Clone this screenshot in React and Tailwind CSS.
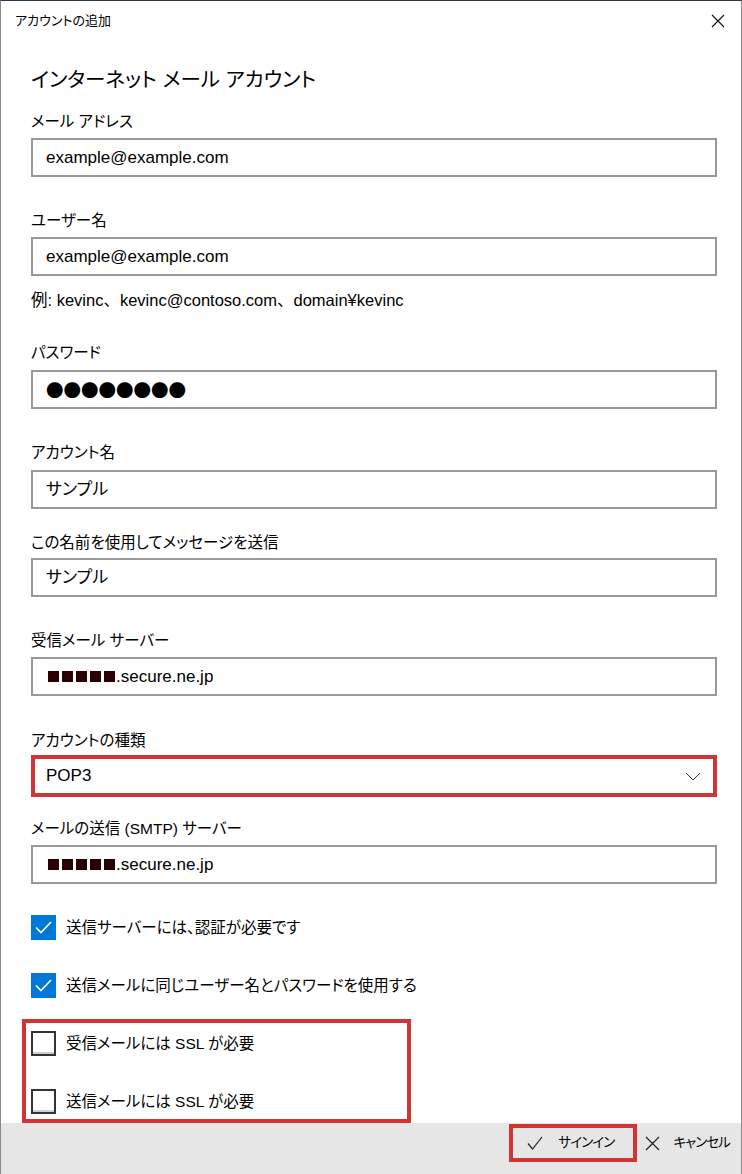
import React from "react";

const FONT = { fontFamily: '"Liberation Sans", "Noto Sans CJK JP", sans-serif', fontFeatureSettings: '"palt"' };

function Label({ children, className = "" }) {
    return <div className={`h-[22px] leading-[22px] text-[15.5px] text-black ${className}`}>{children}</div>
}

function Field({ children, className = "" }) {
    return (
        <div className={`h-[39px] border-2 border-[#999999] bg-white flex items-center pl-[13px] text-[17px] text-black ${className}`}>
            {children}
        </div>
    )
}

function Masked() {
    return (
        <span className="flex items-center">
            <span className="flex gap-[3px] mr-[1px] ml-[2px]">
                <span className="w-[11px] h-[11px] bg-[#2a0000]"></span>
                <span className="w-[11px] h-[11px] bg-[#2a0000]"></span>
                <span className="w-[11px] h-[11px] bg-[#2a0000]"></span>
                <span className="w-[11px] h-[11px] bg-[#2a0000]"></span>
                <span className="w-[11px] h-[11px] bg-[#2a0000]"></span>
            </span>
            .secure.ne.jp
        </span>
    )
}

function Check({ checked, children, className = "" }) {
    return (
        <div className={`flex items-center h-[25px] ${className}`}>
            {checked ? (
                <span className="w-[25px] h-[25px] bg-[#0078d7] flex items-center justify-center">
                    <svg width="17" height="13" viewBox="0 0 17 13">
                        <path d="M1 6.5 L6 11.5 L16 1" fill="none" stroke="white" strokeWidth="1.6" />
                    </svg>
                </span>
            ) : (
                <span className="w-[25px] h-[25px] border-2 border-[#333333] bg-white shadow-[inset_0_-2px_0_#cfcfcf]"></span>
            )}
            <span className="ml-[10px] text-[15.5px] text-black leading-[22px]">{children}</span>
        </div>
    )
}

export default function App() {
    return (
        <div style={FONT} className="w-[742px] h-[1174px] flex flex-col bg-white border-t border-[#2b3a4a] border-l border-r border-l-[#8a8a8a] border-r-[#8a8a8a] overflow-hidden">
            <div className="h-[39px] flex items-center justify-between pl-[14px] pr-[16px]">
                <span className="text-[13px] text-black">アカウントの追加</span>
                <svg width="14" height="14" viewBox="0 0 14 14">
                    <path d="M1 1 L13 13 M13 1 L1 13" stroke="#111" strokeWidth="1.1" />
                </svg>
            </div>

            <div className="flex flex-col pl-[30px] pr-[24px]">
                <div className="mt-[26px] h-[28px] leading-[28px] text-[20.5px] text-black">インターネット メール アカウント</div>

                <Label className="mt-[17px]">メール アドレス</Label>
                <Field className="mt-[5px]">example@example.com</Field>

                <Label className="mt-[33px]">ユーザー名</Label>
                <Field className="mt-[5px]">example@example.com</Field>
                <div className="mt-[13px] h-[22px] leading-[22px] text-[16.5px] text-black [font-feature-settings:normal]">例: kevinc、kevinc@contoso.com、domain¥kevinc</div>

                <Label className="mt-[31px]">パスワード</Label>
                <Field className="mt-[6px]">
                    <span className="text-[17.5px] leading-none [font-family:'Noto_Sans_CJK_JP',sans-serif]">●●●●●●●●</span>
                </Field>

                <Label className="mt-[33px]">アカウント名</Label>
                <Field className="mt-[6px]">サンプル</Field>

                <Label className="mt-[23px]">この名前を使用してメッセージを送信</Label>
                <Field className="mt-[4px]">サンプル</Field>

                <Label className="mt-[33px]">受信メール サーバー</Label>
                <Field className="mt-[5px]"><Masked /></Field>

                <Label className="mt-[34px]">アカウントの種類</Label>
                <div className="mt-[3px] h-[42px] border-4 border-[#d03535] bg-white flex items-center justify-between pl-[11px] pr-[12px] text-[17px] text-black">
                    <span>POP3</span>
                    <svg width="16" height="9" viewBox="0 0 16 9">
                        <path d="M1 1 L8 8 L15 1" fill="none" stroke="#333" strokeWidth="1" />
                    </svg>
                </div>

                <Label className="mt-[21px]">メールの送信 (SMTP) サーバー</Label>
                <Field className="mt-[5px]"><Masked /></Field>

                <Check checked className="mt-[31px]">送信サーバーには、認証が必要です</Check>
                <Check checked className="mt-[33px]">送信メールに同じユーザー名とパスワードを使用する</Check>

                <div className="mt-[21px] -ml-[9px] w-[389px] h-[104px] border-4 border-[#d03535] pl-[5px] pt-[8px]">
                    <Check>受信メールには SSL が必要</Check>
                    <Check className="mt-[33px]">送信メールには SSL が必要</Check>
                </div>
            </div>

            <div className="flex-1 bg-[#e6e6e6] flex justify-end items-start pt-[1px] pr-[11px]">
                <div className="w-[128px] h-[38px] border-4 border-[#d03535] flex items-center pl-[14px]">
                    <svg width="16" height="14" viewBox="0 0 16 14">
                        <path d="M1 7.5 L5.5 13 L15 1" fill="none" stroke="#222" strokeWidth="1.2" />
                    </svg>
                    <span className="ml-[15px] text-[13.5px] tracking-[-0.9px] text-black">サインイン</span>
                </div>
                <div className="h-[38px] flex items-center ml-[8px]">
                    <svg width="15" height="15" viewBox="0 0 15 15">
                        <path d="M1 1 L14 14 M14 1 L1 14" stroke="#222" strokeWidth="1.2" />
                    </svg>
                    <span className="ml-[13px] text-[13.5px] tracking-[-0.9px] text-black">キャンセル</span>
                </div>
            </div>
        </div>
    )
}
